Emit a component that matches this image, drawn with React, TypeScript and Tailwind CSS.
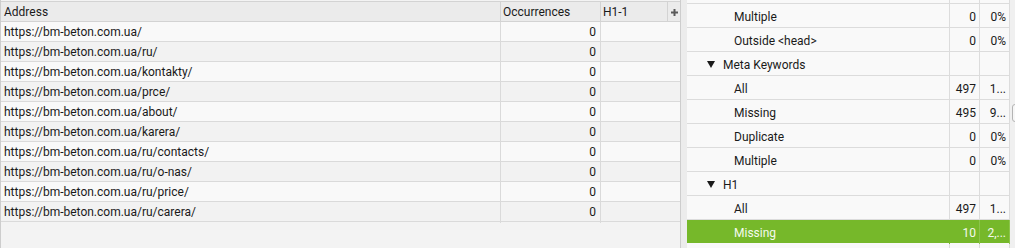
import React from "react";

const urls = [
  "https://bm-beton.com.ua/",
  "https://bm-beton.com.ua/ru/",
  "https://bm-beton.com.ua/kontakty/",
  "https://bm-beton.com.ua/prce/",
  "https://bm-beton.com.ua/about/",
  "https://bm-beton.com.ua/karera/",
  "https://bm-beton.com.ua/ru/contacts/",
  "https://bm-beton.com.ua/ru/o-nas/",
  "https://bm-beton.com.ua/ru/price/",
  "https://bm-beton.com.ua/ru/carera/",
];

type R = { label: string; count?: string; pct?: string; group?: boolean; active?: boolean };

const rows: R[] = [
  { label: "Multiple", count: "0", pct: "0%" },
  { label: "Outside <head>", count: "0", pct: "0%" },
  { label: "Meta Keywords", group: true },
  { label: "All", count: "497", pct: "1..." },
  { label: "Missing", count: "495", pct: "9..." },
  { label: "Duplicate", count: "0", pct: "0%" },
  { label: "Multiple", count: "0", pct: "0%" },
  { label: "H1", group: true },
  { label: "All", count: "497", pct: "1..." },
  { label: "Missing", count: "10", pct: "2,...", active: true },
];

export default function App() {
  return (
    <div className="flex w-[1015px] h-[248px] overflow-hidden bg-[#f3f3f3] font-['Roboto',sans-serif] text-[12px] text-[#1a1a1a]">
      {/* left table */}
      <div className="w-[681px] h-full border-l border-r border-[#cdcdcd] pt-[1px] flex flex-col">
        <div className="grid grid-cols-[500px_100px_67px_12px] h-[21px] border-t border-b border-[#d3d3d3] bg-[#ebebeb] leading-[21px]">
          <div className="border-r border-[#d3d3d3] pl-[3px]">Address</div>
          <div className="border-r border-[#d3d3d3] pl-[2px]">Occurrences</div>
          <div className="border-r border-[#d3d3d3] pl-[2px]">H1-1</div>
          <div className="flex items-center justify-center">
            <svg width="7" height="7" viewBox="0 0 7 7">
              <rect x="2.5" y="0" width="2" height="7" fill="#5a5a5a" />
              <rect x="0" y="2.5" width="7" height="2" fill="#5a5a5a" />
            </svg>
          </div>
        </div>
        {urls.map((u, i) => (
          <div
            key={i}
            className={`grid grid-cols-[500px_100px_79px] h-[20px] border-b border-[#dadada] leading-[21px] ${
              i % 2 === 0 ? "bg-[#f9f9f9]" : "bg-[#f2f2f2]"
            }`}
          >
            <div className="border-r border-[#dadada] pl-[3px] whitespace-nowrap">{u}</div>
            <div className="border-r border-[#dadada] pr-[4px] text-right">0</div>
            <div></div>
          </div>
        ))}
      </div>
      {/* divider strip */}
      <div className="w-[6px] h-full bg-[#ececec]"></div>
      {/* right panel */}
      <div className="relative flex-1 h-full flex">
        <div className="w-[323px] flex flex-col bg-[#f9f9f9]">
          <div className="h-[4px] border-b border-[#dcdcdc] grid grid-cols-[263px_30px_30px]">
            <div className="border-r border-[#dcdcdc]"></div>
            <div className="border-r border-[#dcdcdc]"></div>
            <div className="border-r border-[#dcdcdc]"></div>
          </div>
          {rows.map((r, i) => (
            <div
              key={i}
              className={`h-[24px] border-b grid grid-cols-[263px_30px_30px] leading-[26px] ${
                r.active ? "bg-[#76b82a] text-[#f4faee] border-[#f9f9f9]" : "border-[#dcdcdc]"
              }`}
            >
              <div
                className={`border-r whitespace-nowrap flex items-start ${
                  r.active ? "border-[#76b82a]" : "border-[#dcdcdc]"
                } ${r.group ? "pl-[20px]" : "pl-[47px]"}`}
              >
                {r.group && (
                  <svg width="8" height="7" viewBox="0 0 8 7" className="mr-[8px] mt-[9px]">
                    <polygon points="0,0 8,0 4,7" fill="#1a1a1a" />
                  </svg>
                )}
                <span>{r.label}</span>
              </div>
              <div className={`border-r text-right pr-[3px] ${r.active ? "border-[#8cc44c]" : "border-[#dcdcdc]"}`}>
                {r.count ?? ""}
              </div>
              <div className={`border-r text-right pr-[3px] whitespace-nowrap overflow-hidden ${r.active ? "border-[#8cc44c]" : "border-[#dcdcdc]"}`}>
                {r.pct ?? ""}
              </div>
            </div>
          ))}
          <div className="flex-1 grid grid-cols-[263px_30px_30px]">
            <div className="border-r border-[#dcdcdc]"></div>
            <div className="border-r border-[#dcdcdc]"></div>
            <div className="border-r border-[#dcdcdc]"></div>
          </div>
        </div>
        <div className="w-[5px] h-full bg-[#f0f0f0]"></div>
        <div className="absolute left-[325px] top-[104px] w-[6px] h-[18px] rounded-[3px] border border-[#b4b4b4] bg-[#f7f7f7]"></div>
      </div>
    </div>
  );
}
